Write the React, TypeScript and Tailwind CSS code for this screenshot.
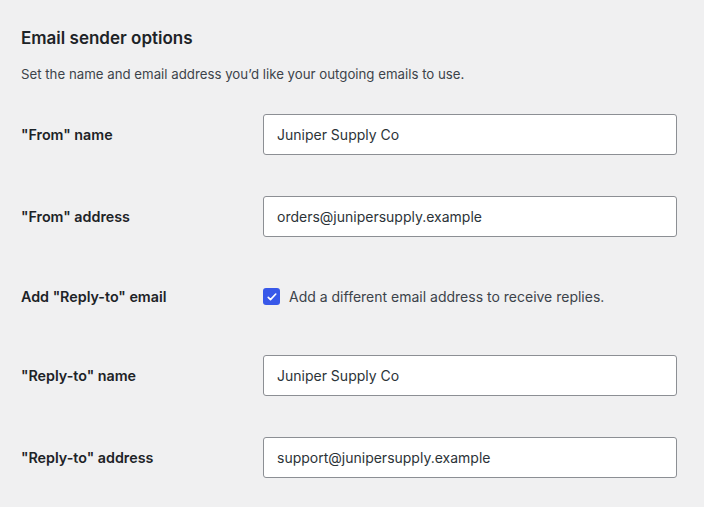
const font = { fontFamily: 'Inter, "Noto Sans", sans-serif' }

function TextRow({ label, value }: { label: string; value: string }) {
  return (
    <div className="grid grid-cols-[242px_414px] items-center pt-5 pb-[21px]">
      <div className="text-[14.3px] font-semibold text-[#1d2327]">{label}</div>
      <input
        readOnly
        value={value}
        className="h-[41px] w-full rounded-[3px] border border-[#8c8f94] bg-white px-[13px] text-[14px] text-[#2c3338] outline-none"
        style={font}
      />
    </div>
  )
}

export default function App() {
  return (
    <div className="min-h-screen bg-[#f0f0f1] pl-[21px] pt-[26px]" style={font}>
      <h2 className="text-[17px] leading-[24px] font-semibold text-[#1d2327]">Email sender options</h2>
      <p className="mt-[14px] text-[13.25px] leading-[20px] text-[#3c434a]">
        Set the name and email address you’d like your outgoing emails to use.
      </p>

      <div className="mt-[10px]">
        <TextRow label={'"From" name'} value="Juniper Supply Co" />
        <TextRow label={'"From" address'} value="orders@junipersupply.example" />

        <div className="grid h-[77px] grid-cols-[242px_414px] items-center">
          <div className="text-[14.3px] font-semibold text-[#1d2327]">Add "Reply-to" email</div>
          <label className="flex items-center gap-[9px] text-[14px] text-[#3c434a]">
            <span className="flex size-[17px] items-center justify-center rounded-[3px] bg-[#3858e9]">
              <svg viewBox="0 0 16 16" className="size-[12px]" fill="none">
                <path d="M3 8.5l3 3 7-7.5" stroke="white" strokeWidth="2.2" strokeLinecap="round" strokeLinejoin="round" />
              </svg>
            </span>
            Add a different email address to receive replies.
          </label>
        </div>

        <TextRow label={'"Reply-to" name'} value="Juniper Supply Co" />
        <TextRow label={'"Reply-to" address'} value="support@junipersupply.example" />
      </div>
    </div>
  )
}
